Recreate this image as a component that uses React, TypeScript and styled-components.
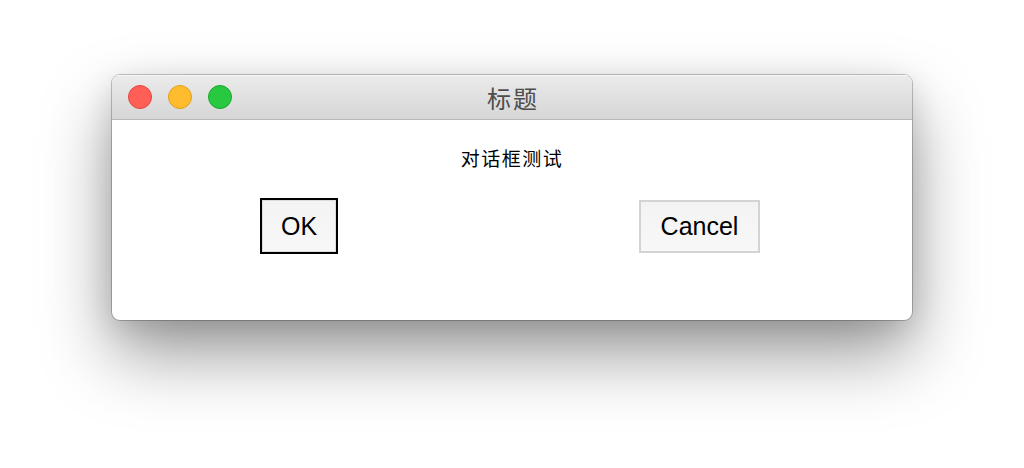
import React from 'react';
import styled, { createGlobalStyle } from 'styled-components';

const GlobalStyle = createGlobalStyle`
  html, body {
    margin: 0;
    padding: 0;
    background: #ffffff;
  }
  body {
    font-family: "Liberation Sans", Arial, "Noto Sans CJK SC", sans-serif;
  }
`;

const Page = styled.div`
  width: 1024px;
  height: 468px;
  box-sizing: border-box;
  padding-top: 75px;
  display: flex;
  justify-content: center;
  align-items: flex-start;
  overflow: hidden;
`;

const Window = styled.div`
  width: 800px;
  height: 245px;
  border-radius: 8px;
  background: #ffffff;
  overflow: hidden;
  display: flex;
  flex-direction: column;
  box-shadow:
    0 0 0 1px rgba(0, 0, 0, 0.22),
    0 34px 70px rgba(0, 0, 0, 0.4),
    0 8px 30px rgba(0, 0, 0, 0.12);
`;

const TitleBar = styled.div`
  position: relative;
  height: 44px;
  flex: none;
  display: flex;
  align-items: center;
  justify-content: center;
  background: linear-gradient(#ebebeb, #d6d6d6);
  border-bottom: 1px solid #b8b8b8;
  box-shadow: inset 0 1px 0 #f6f6f6;
`;

const Lights = styled.div`
  position: absolute;
  left: 16px;
  top: 10px;
  display: flex;
  gap: 16px;
`;

const Light = styled.span<{ fill: string; edge: string }>`
  width: 22px;
  height: 22px;
  border-radius: 50%;
  background: ${({ fill }) => fill};
  border: 1px solid ${({ edge }) => edge};
`;

const Title = styled.div`
  font-family: "Noto Sans CJK SC", "Liberation Sans", sans-serif;
  font-size: 24px;
  color: #4d4d4d;
  letter-spacing: 2px;
  margin-left: 2px;
`;

const Body = styled.div`
  flex: 1;
  display: flex;
  flex-direction: column;
  align-items: stretch;
`;

const Message = styled.div`
  margin-top: 25px;
  text-align: center;
  font-family: "Noto Sans CJK SC", "Liberation Sans", sans-serif;
  font-size: 19px;
  letter-spacing: 1.5px;
  line-height: 26px;
  color: #000;
`;

const ButtonRow = styled.div`
  margin-top: 27px;
  padding: 0 152px 0 148px;
  display: flex;
  justify-content: space-between;
  align-items: center;
`;

const DialogButton = styled.button<{ primary?: boolean }>`
  box-sizing: border-box;
  width: ${({ primary }) => (primary ? '78px' : '121px')};
  height: ${({ primary }) => (primary ? '56px' : '53px')};
  margin: 0;
  padding: 0;
  font-family: "Liberation Sans", Arial, sans-serif;
  font-size: 25px;
  color: #000;
  background: linear-gradient(#f3f3f3, #f8f8f8);
  border: 2px solid ${({ primary }) => (primary ? '#000000' : '#d3d3d3')};
  box-shadow: ${({ primary }) => (primary ? 'inset 0 0 0 1px #dcdcdc' : 'none')};
  border-radius: 0;
`;

export default function App() {
  return (
    <>
      <GlobalStyle />
      <Page>
        <Window>
          <TitleBar>
            <Lights>
              <Light fill="#ff5f57" edge="#e2463f" />
              <Light fill="#febc2e" edge="#e1a116" />
              <Light fill="#28c840" edge="#17a82b" />
            </Lights>
            <Title>标题</Title>
          </TitleBar>
          <Body>
            <Message>对话框测试</Message>
            <ButtonRow>
              <DialogButton primary>OK</DialogButton>
              <DialogButton>Cancel</DialogButton>
            </ButtonRow>
          </Body>
        </Window>
      </Page>
    </>
  );
}
